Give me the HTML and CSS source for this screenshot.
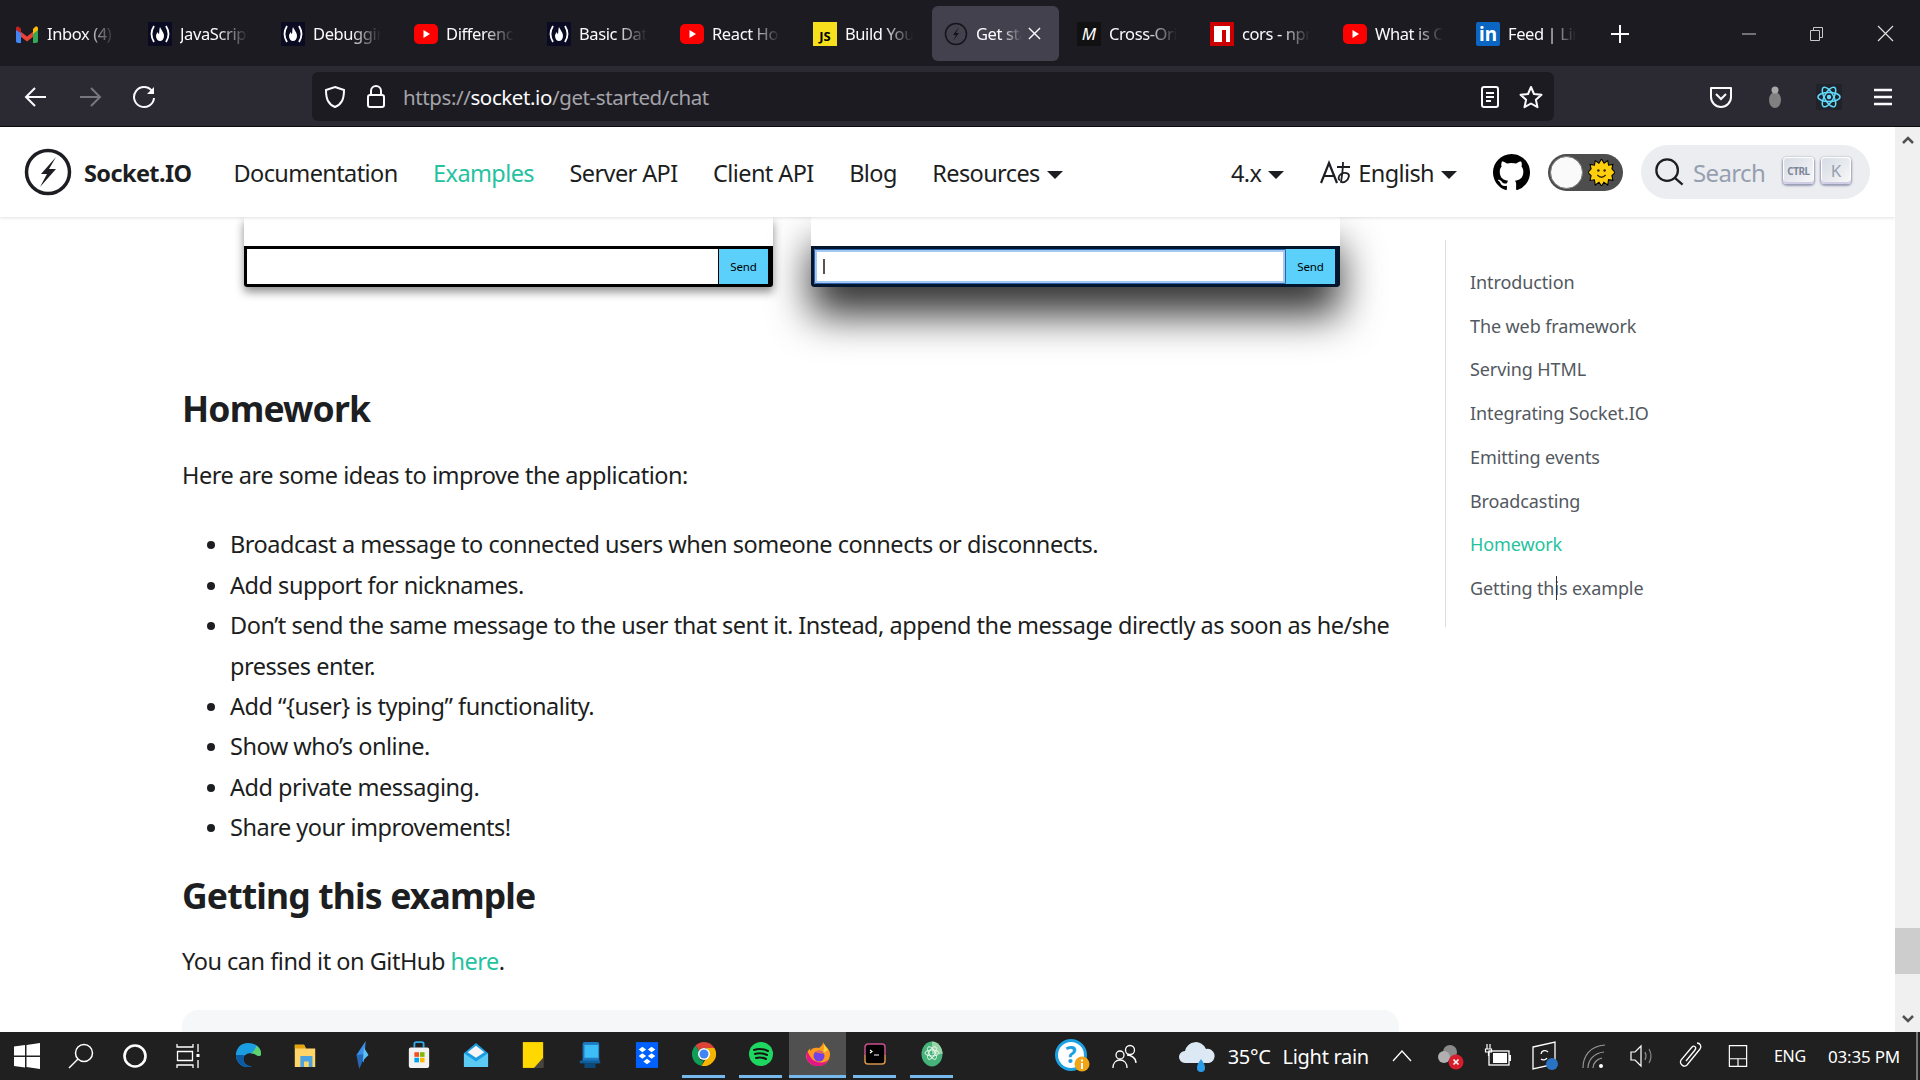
FILE: index.html
```html
<!DOCTYPE html>
<html lang="en">
<head>
    <meta charset="UTF-8">
    <title>Get started | Socket.IO</title>
    <link rel="stylesheet" href="styles.css">
</head>
<body>

    <svg class="defs" width="0" height="0">
        <symbol id="fcc" viewBox="0 0 24 24">
            <rect width="24" height="24" fill="#0a0a23"/>
            <path d="M6 4Q1 12 6 20M18 4Q23 12 18 20" fill="none" stroke="#fff" stroke-width="1.8"/>
            <path d="M12 5c1 3 4 5 4 9 0 3-2 5-4 5s-4-2-4-5c0-2 1-3 2-4 0 1 .5 2 1 2 .5-2 0-4 1-7z" fill="#fff"/>
        </symbol>
        <symbol id="yt" viewBox="0 0 24 24">
            <rect y="2" width="24" height="20" rx="5" fill="#f00"/>
            <path d="M9.5 8l6.5 4-6.500 4z" fill="#fff"/>
        </symbol>
    </svg>

    <!-- Tab strip -->
    <div class="tabbar">
        <div class="tab">
            <svg class="favicon" viewBox="0 0 24 24"><path d="M1 6l11 8.500L23 6v5l-11 8.500L1 11z" fill="#ea4335"/><path d="M1 7l5 4v10H3a2 2 0 0 1-2-2z" fill="#4285f4"/><path d="M18 11l5-4v12a2 2 0 0 1-2 2h-3z" fill="#34a853"/><path d="M18 7l2-2c1-1 3-.5 3 1.500V8l-5 4z" fill="#fbbc04"/><path d="M1 8V6.500C1 4.500 3 4 4 5l2 2v4z" fill="#c5221f"/></svg>
            <span class="tab-label">Inbox (4) - Gmail</span>
        </div>
        <div class="tab"><svg class="favicon"><use href="#fcc"/></svg><span class="tab-label">JavaScript Tutorial</span></div>
        <div class="tab"><svg class="favicon"><use href="#fcc"/></svg><span class="tab-label">Debugging Node</span></div>
        <div class="tab"><svg class="favicon"><use href="#yt"/></svg><span class="tab-label">Difference between</span></div>
        <div class="tab"><svg class="favicon"><use href="#fcc"/></svg><span class="tab-label">Basic Data Types</span></div>
        <div class="tab"><svg class="favicon"><use href="#yt"/></svg><span class="tab-label">React Hooks Course</span></div>
        <div class="tab">
            <span class="favicon js-icon">JS</span>
            <span class="tab-label">Build Your Own</span>
        </div>
        <div class="tab active">
            <svg class="favicon" viewBox="0 0 24 24"><circle cx="12" cy="12" r="10.500" fill="none" stroke="#15141a" stroke-width="1.500"/><path d="M15 5L9 13h3l-3 6 6-8h-3z" fill="#15141a"/></svg>
            <span class="tab-label short">Get started</span>
            <svg class="tab-close" viewBox="0 0 14 14"><path d="M1 1l12 12M13 1L1 13" stroke="#fbfbfe" stroke-width="1.500"/></svg>
        </div>
        <div class="tab">
            <span class="favicon mdn-icon">M</span>
            <span class="tab-label">Cross-Origin Resource</span>
        </div>
        <div class="tab">
            <svg class="favicon" viewBox="0 0 24 24"><rect width="24" height="24" fill="#c00"/><path d="M4 4h16v16h-4V8h-4v12H4z" fill="#fff"/></svg>
            <span class="tab-label">cors - npm package</span>
        </div>
        <div class="tab"><svg class="favicon"><use href="#yt"/></svg><span class="tab-label">What is CORS?</span></div>
        <div class="tab">
            <span class="favicon in-icon">in</span>
            <span class="tab-label">Feed | LinkedIn</span>
        </div>
        <div class="new-tab">
            <svg width="20" height="20" viewBox="0 0 20 20"><path d="M10 1v18M1 10h18" stroke="#fbfbfe" stroke-width="2"/></svg>
        </div>
        <div class="window-controls">
            <div class="window-btn"><svg width="16" height="16" viewBox="0 0 16 16"><path d="M1 8h14" stroke="#c8c8c8"/></svg></div>
            <div class="window-btn"><svg width="16" height="16" viewBox="0 0 16 16"><path d="M1.500 4.500h9v10h-9zM4.500 4.500v-3h9v10h-3" fill="none" stroke="#c8c8c8"/></svg></div>
            <div class="window-btn"><svg width="17" height="17" viewBox="0 0 17 17"><path d="M1 1l15 15M16 1L1 16" stroke="#e0e0e0" stroke-width="1.200"/></svg></div>
        </div>
    </div>

    <!-- Address bar -->
    <div class="toolbar">
        <div class="tool-group">
            <div class="tool-btn"><svg width="24" height="24" viewBox="0 0 24 24"><path d="M22 12H3M11 3l-9 9 9 9" fill="none" stroke="#fbfbfe" stroke-width="2"/></svg></div>
            <div class="tool-btn"><svg width="24" height="24" viewBox="0 0 24 24"><path d="M2 12h19M13 3l9 9-9 9" fill="none" stroke="#77767d" stroke-width="2"/></svg></div>
            <div class="tool-btn"><svg width="24" height="24" viewBox="0 0 24 24"><path d="M20 6A10 10 0 1 0 22 13" fill="none" stroke="#fbfbfe" stroke-width="2"/><path d="M22 2v7h-7" fill="#fbfbfe"/></svg></div>
        </div>
        <div class="urlbar">
            <svg class="url-icon" width="22" height="24" viewBox="0 0 22 24"><path d="M11 2l9 3c0 9-2 14-9 17C4 19 2 14 2 5z" fill="none" stroke="#fbfbfe" stroke-width="2"/></svg>
            <svg class="url-icon" width="20" height="24" viewBox="0 0 20 24"><rect x="2" y="10" width="16" height="12" rx="2" fill="none" stroke="#fbfbfe" stroke-width="2"/><path d="M5 10V6a5 5 0 0 1 10 0v4" fill="none" stroke="#fbfbfe" stroke-width="2"/></svg>
            <span class="url-text">https://<b>socket.io</b>/get-started/chat</span>
            <div class="url-actions">
                <svg width="20" height="22" viewBox="0 0 20 22"><rect x="2" y="1" width="16" height="20" rx="2" fill="none" stroke="#fbfbfe" stroke-width="2"/><path d="M6 7h8M6 11h8M6 15h5" stroke="#fbfbfe" stroke-width="2"/></svg>
                <svg width="24" height="24" viewBox="0 0 24 24"><path d="M12 2l3 7 7.500.8-5.600 5 1.600 7.400L12 18.500l-6.500 3.700L7.100 14.800 1.500 9.800 9 9z" fill="none" stroke="#fbfbfe" stroke-width="2" stroke-linejoin="round"/></svg>
            </div>
        </div>
        <div class="tool-group extensions">
            <div class="tool-btn"><svg width="24" height="24" viewBox="0 0 24 24"><path d="M2 3h20v9a10 10 0 0 1-20 0z" fill="none" stroke="#fbfbfe" stroke-width="2" stroke-linejoin="round"/><path d="M7 9l5 5 5-5" fill="none" stroke="#fbfbfe" stroke-width="2"/></svg></div>
            <div class="tool-btn"><svg width="24" height="24" viewBox="0 0 24 24"><ellipse cx="12" cy="15" rx="6" ry="8" fill="#808080"/><circle cx="12" cy="5" r="3.500" fill="#a8a8a8"/></svg></div>
            <div class="tool-btn"><svg class="react-icon" width="26" height="26" viewBox="0 0 26 26"><rect width="26" height="26" fill="#20232a"/><g fill="none" stroke="#61dafb" stroke-width="1.500"><ellipse cx="13" cy="13" rx="11" ry="4.500"/><ellipse cx="13" cy="13" rx="11" ry="4.500" transform="rotate(60 13 13)"/><ellipse cx="13" cy="13" rx="11" ry="4.500" transform="rotate(120 13 13)"/></g><circle cx="13" cy="13" r="2.200" fill="#61dafb"/></svg></div>
            <div class="tool-btn"><svg width="22" height="20" viewBox="0 0 22 20"><path d="M2 3h18M2 10h18M2 17h18" stroke="#fbfbfe" stroke-width="2.500"/></svg></div>
        </div>
    </div>

    <div class="page">
        <div class="viewport">

            <!-- Site navbar -->
            <header class="navbar">
                <svg class="logo" width="48" height="48" viewBox="0 0 48 48"><circle cx="24" cy="24" r="21.500" fill="none" stroke="#1c1e21" stroke-width="3.500"/><path d="M32 9L17 26h6l-7 13 16-18h-7z" fill="#1c1e21"/></svg>
                <span class="brand">Socket.IO</span>
                <nav class="nav-links">
                    <a href="#">Documentation</a>
                    <a href="#" class="current">Examples</a>
                    <a href="#">Server API</a>
                    <a href="#">Client API</a>
                    <a href="#">Blog</a>
                    <a href="#" class="dropdown">Resources</a>
                </nav>
                <div class="nav-right">
                    <a href="#" class="dropdown version">4.x</a>
                    <a href="#" class="dropdown locale">
                        <svg width="32" height="28" viewBox="0 0 32 28"><path d="M1 24L9 4l8 20M4 17h10" fill="none" stroke="#1c1e21" stroke-width="2.200"/><path d="M17 8h13M23 3c0 7-1 14-2 20 3 1 7-1 8-6 0-3-4-4-8-2-3 2-3 6-1 6" fill="none" stroke="#1c1e21" stroke-width="1.800"/></svg>
                        English
                    </a>
                    <svg class="github" width="37" height="37" viewBox="0 0 16 16"><path fill="#000" d="M8 0C3.580 0 0 3.580 0 8c0 3.540 2.290 6.530 5.470 7.590.4.070.55-.17.55-.38 0-.19-.01-.82-.01-1.490-2.010.37-2.530-.49-2.690-.94-.09-.23-.48-.94-.82-1.130-.28-.15-.68-.52-.01-.53.63-.01 1.080.58 1.230.82.72 1.210 1.870.87 2.330.66.070-.52.28-.87.51-1.070-1.780-.2-3.640-.89-3.640-3.950 0-.87.31-1.590.82-2.150-.08-.2-.36-1.020.08-2.120 0 0 .67-.21 2.200.82.64-.18 1.320-.27 2-.27.68 0 1.360.09 2 .27 1.530-1.040 2.200-.82 2.200-.82.44 1.100.16 1.920.08 2.120.51.56.82 1.270.82 2.150 0 3.070-1.870 3.750-3.650 3.950.29.25.54.73.54 1.480 0 1.070-.01 1.930-.01 2.200 0 .21.15.46.55.38A8.013 8.013 0 0 0 16 8c0-4.420-3.580-8-8-8z"/></svg>
                    <div class="toggle">
                        <span class="toggle-knob"></span>
                        <svg class="toggle-sun" width="27" height="27" viewBox="0 0 26 26"><path d="M13 0l2.500 4L19 1.500 19.800 6l4.200-.8-1 4.300L26 13l-3 3 1 4.500-4.300-.6L19 25l-3.700-2.600L13 26l-2.400-3.600L7 25l-.8-5-4.200.6L3 16l-3-3 3-3.500L2 5.200 6.200 6 7 1.500l3.500 2.500z" fill="#ffcf0d" stroke="#000" stroke-width="1"/><circle cx="10" cy="11" r="1.200" fill="#332400"/><circle cx="16" cy="11" r="1.200" fill="#332400"/><path d="M9 15.500q4 4 8 0" fill="none" stroke="#332400" stroke-width="1.300"/></svg>
                    </div>
                    <div class="search">
                        <svg width="30" height="30" viewBox="0 0 32 32"><circle cx="14" cy="14" r="11.500" fill="none" stroke="#1c1e21" stroke-width="2.400"/><path d="M22.500 22.500l8 7" stroke="#1c1e21" stroke-width="2.400"/></svg>
                        <span class="search-label">Search</span>
                        <span class="key ctrl">CTRL</span>
                        <span class="key">K</span>
                    </div>
                </div>
            </header>

            <div class="docs">
                <!-- Article -->
                <main class="article">
                    <div class="demo-row">
                        <div class="demo-card">
                            <div class="demo-form">
                                <div class="demo-input"></div>
                                <div class="demo-send">Send</div>
                            </div>
                        </div>
                        <div class="demo-card focused">
                            <div class="demo-form">
                                <div class="demo-input"><span class="input-caret"></span></div>
                                <div class="demo-send">Send</div>
                            </div>
                        </div>
                    </div>

                    <h2>Homework</h2>
                    <p>Here are some ideas to improve the application:</p>
                    <ul>
                        <li>Broadcast a message to connected users when someone connects or disconnects.</li>
                        <li>Add support for nicknames.</li>
                        <li>Don’t send the same message to the user that sent it. Instead, append the message directly as soon as he/she presses enter.</li>
                        <li>Add “{user} is typing” functionality.</li>
                        <li>Show who’s online.</li>
                        <li>Add private messaging.</li>
                        <li>Share your improvements!</li>
                    </ul>

                    <h2 class="second">Getting this example</h2>
                    <p>You can find it on GitHub <a href="#">here</a>.</p>
                    <div class="code-block"></div>
                </main>

                <!-- Table of contents -->
                <aside class="toc">
                    <a href="#">Introduction</a>
                    <a href="#">The web framework</a>
                    <a href="#">Serving HTML</a>
                    <a href="#">Integrating Socket.IO</a>
                    <a href="#">Emitting events</a>
                    <a href="#">Broadcasting</a>
                    <a href="#" class="current">Homework</a>
                    <a href="#" class="hovered">Getting this example<span class="ibeam"></span></a>
                </aside>
            </div>
        </div>

        <div class="scrollbar">
            <svg width="14" height="10" viewBox="0 0 14 10"><path d="M2 8l5-5 5 5" fill="none" stroke="#505050" stroke-width="2.500"/></svg>
            <div class="scroll-space"></div>
            <div class="scroll-thumb"></div>
            <div class="scroll-rest"></div>
            <svg width="14" height="10" viewBox="0 0 14 10"><path d="M2 2l5 5 5-5" fill="none" stroke="#505050" stroke-width="2.500"/></svg>
        </div>
    </div>

    <!-- Windows taskbar -->
    <footer class="taskbar">
        <div class="task-left">
            <div class="sys-btn"><svg width="26" height="26" viewBox="0 0 26 26"><path d="M0 3.600l11-1.500v10.400H0zM12.500 1.900L26 0v12.500H12.500zM0 14h11v10.400L0 22.900zM12.500 14H26v12l-13.500-1.900z" fill="#fff"/></svg></div>
            <div class="sys-btn"><svg width="26" height="26" viewBox="0 0 26 26"><circle cx="16" cy="10" r="8.500" fill="none" stroke="#fff" stroke-width="1.500"/><path d="M10 16L1 25" stroke="#fff" stroke-width="1.500"/></svg></div>
            <div class="sys-btn"><svg width="26" height="26" viewBox="0 0 26 26"><circle cx="13" cy="13" r="10.500" fill="none" stroke="#fff" stroke-width="2.600"/></svg></div>
            <div class="sys-btn"><svg width="26" height="26" viewBox="0 0 26 26"><path d="M1 1v3h16V1M1 25v-3h16v3M1.500 8.500h15v9h-15zM22 1v8M22 17v8" fill="none" stroke="#fff" stroke-width="1.300"/><rect x="20.500" y="11" width="3" height="3" fill="#fff"/></svg></div>

            <div class="app"><svg width="26" height="26" viewBox="0 0 28 28"><path d="M14 1C6 1 1 7 1 14c0 8 6 13 12 13 2 0 4-.5 5-1-5 0-9-3-9-8 0-4 4-6 8-6 5 0 6 3 9 3 2 0 2-2 2-3C28 6 22 1 14 1z" fill="#1b9de2"/><path d="M17 12c5 0 6 3 9 3 2 0 2-2 2-3 0-3-2-6-5-8-1 3-3 7-6 8z" fill="#5fd36a"/><path d="M1 14c0 8 6 13 12 13 2 0 4-.5 5-1-5 0-9-3-9-8 0-2 1-3 2-4-5 0-9 0-10 0z" fill="#0c59a4"/></svg></div>
            <div class="app"><svg width="26" height="26" viewBox="0 0 28 28"><path d="M3 3h10l2 4h10v20H3z" fill="#ffd56a"/><path d="M3 3h10l2 4H3z" fill="#e5a50a"/><path d="M9 15h13v12h-4v-6h-5v6H9z" fill="#4aa3e0"/></svg></div>
            <div class="app"><svg width="26" height="30" viewBox="0 0 28 32"><path d="M18 1L8 16l8 8z" fill="#3c8fe8"/><path d="M8 16l10-1-7 16z" fill="#2667b8"/><path d="M16 8l5 8-6 6z" fill="#59c3f5"/></svg></div>
            <div class="app"><svg width="24" height="28" viewBox="0 0 26 30"><path d="M8 7V3a2 2 0 0 1 2-2h6a2 2 0 0 1 2 2v4" fill="none" stroke="#32a8e8" stroke-width="2"/><rect x="2" y="7" width="22" height="22" rx="2" fill="#f2f2f2"/><rect x="8" y="12" width="5" height="5" fill="#f25022"/><rect x="14" y="12" width="5" height="5" fill="#7fba00"/><rect x="8" y="18" width="5" height="5" fill="#00a4ef"/><rect x="14" y="18" width="5" height="5" fill="#ffb900"/></svg></div>
            <div class="app"><svg width="26" height="26" viewBox="0 0 28 28"><path d="M1 12L14 1l13 11v15H1z" fill="#1b9de2"/><path d="M1 12l13 9 13-9v15H1z" fill="#5ccbf4"/><path d="M5 11L14 4l9 7-9 6z" fill="#f5f5f5"/></svg></div>
            <div class="app"><svg width="24" height="28" viewBox="0 0 26 30"><rect x="2" y="1" width="22" height="28" fill="#ffd800"/><path d="M14 29l10-11v11z" fill="#444"/></svg></div>
            <div class="app"><svg width="24" height="28" viewBox="0 0 26 30"><rect x="5" y="1" width="18" height="23" rx="2" fill="#1c78c0"/><rect x="7" y="4" width="15" height="14" fill="#3dbdf5"/><rect x="2" y="21" width="22" height="3" fill="#0e5f9e"/><rect x="7" y="24" width="12" height="5" fill="#0b4a7d"/></svg></div>
            <div class="app"><svg width="24" height="28" viewBox="0 0 26 30"><rect x="1" y="1" width="24" height="28" fill="#0061fe"/><g fill="#fff"><path d="M8 6l4 3-4 3-4-3zM18 6l4 3-4 3-4-3zM8 13l4 3-4 3-4-3zM18 13l4 3-4 3-4-3zM13 19l4 3-4 3-4-3z"/></g></svg></div>
            <div class="app running"><svg width="24" height="24" viewBox="0 0 24 24"><path d="M12 0a12 12 0 0 1 10.400 6H12a6 6 0 0 0-5.200 3L3.500 3.500A12 12 0 0 1 12 0z" fill="#db4437"/><path d="M3.500 3.500L9 12a3 3 0 0 0 3 6l-2.500 5.800A12 12 0 0 1 3.500 3.500z" fill="#0f9d58"/><path d="M22.400 6A12 12 0 0 1 9.500 23.800L15 15a6 6 0 0 0-1-9z" fill="#f4b400"/><circle cx="12" cy="12" r="6" fill="#fff"/><circle cx="12" cy="12" r="4.500" fill="#4285f4"/></svg></div>
            <div class="app running"><svg width="24" height="24" viewBox="0 0 24 24"><circle cx="12" cy="12" r="12" fill="#1ed760"/><path d="M5 8q7-2.500 14 1M6 12q6-2 12 1M7 16q5-1.500 10 1" fill="none" stroke="#191414" stroke-width="2" stroke-linecap="round"/></svg></div>
            <div class="app running hot"><svg width="24" height="24" viewBox="0 0 24 24"><path d="M17 0c0 3-2 4-4 6-4-1-7 0-9 3 0-1 0-2 .5-3C1 9 0 13 0 15c1 5 6 9 12 9 7 0 12-5 12-12 0-5-5-7-7-12z" fill="#ff9a1f"/><path d="M18 2c1 2 3 4 4 6l-5 3c1-3 1-6 1-9z" fill="#ffd43a"/><path d="M1 9c-2 6 0 11 4 13 4 3 10 3 14 0 2-2 3-3 3-4-5 4-12 3-16-1-2-2-3-5-5-8z" fill="#e31587"/><circle cx="13" cy="14" r="5.500" fill="#7542e5"/><path d="M9 10c3-2 7-1 9 2-3-1-6-1-9-2z" fill="#ff7139"/></svg></div>
            <div class="app running"><svg width="22" height="22" viewBox="0 0 22 22"><rect x="1" y="1" width="20" height="20" rx="3" fill="#000"/><path d="M1 12V4a3 3 0 0 1 3-3h14a3 3 0 0 1 3 3v8" fill="none" stroke="#c84f8f" stroke-width="1.500"/><path d="M1 12v6a3 3 0 0 0 3 3h14a3 3 0 0 0 3-3v-6" fill="none" stroke="#d69447" stroke-width="1.500"/><path d="M6 7l2 1.500-2 1.500M10 12h5" fill="none" stroke="#fff" stroke-width="1.200"/></svg></div>
            <div class="app running"><svg width="22" height="26" viewBox="0 0 22 26"><ellipse cx="11" cy="13" rx="10.500" ry="12.500" fill="#46b37a"/><path d="M11 .5A10.500 12.500 0 0 1 21.500 13H11z" fill="#96d4a6"/><g fill="none" stroke="#e6f5ea" stroke-width="1"><ellipse cx="11" cy="12" rx="7" ry="3"/><ellipse cx="11" cy="12" rx="7" ry="3" transform="rotate(60 11 12)"/><ellipse cx="11" cy="12" rx="7" ry="3" transform="rotate(120 11 12)"/></g></svg></div>
        </div>

        <div class="task-right">
            <div class="tray help"><svg width="36" height="36" viewBox="0 0 36 36"><circle cx="16" cy="17" r="14.500" fill="#fff" stroke="#1ba1e2" stroke-width="3"/><text x="16" y="25" text-anchor="middle" class="help-mark">?</text><circle cx="27" cy="26" r="7.500" fill="#f2a516"/><rect x="26" y="25" width="2" height="6" fill="#fff"/><rect x="26" y="21.500" width="2" height="2" fill="#fff"/></svg></div>
            <div class="tray people"><svg width="26" height="26" viewBox="0 0 26 26"><circle cx="18" cy="7" r="4.500" fill="none" stroke="#fff" stroke-width="1.300"/><circle cx="8" cy="12" r="4" fill="none" stroke="#fff" stroke-width="1.300"/><path d="M1 25c0-5 3-8 7-8s7 3 7 8M15 12c4 0 9 3 9 8" fill="none" stroke="#fff" stroke-width="1.300"/></svg></div>
            <div class="weather">
                <svg width="38" height="34" viewBox="0 0 38 34"><path d="M7 24a6 6 0 0 1 0-12 11 11 0 0 1 21-2 7 7 0 0 1 3 14z" fill="#dce9f5"/><path d="M23 20c3 4 4 6 4 9a4 4 0 0 1-8 0c0-3 1-5 4-9z" fill="#2b9de8"/></svg>
                <span class="temp">35°C</span>
                <span>Light rain</span>
            </div>
            <div class="tray chevron"><svg width="22" height="14" viewBox="0 0 22 14"><path d="M2 12L11 2l9 10" fill="none" stroke="#fff" stroke-width="1.300"/></svg></div>
            <div class="tray"><svg width="28" height="28" viewBox="0 0 28 28"><circle cx="14" cy="10" r="7" fill="#8a8a8a"/><circle cx="8" cy="15" r="6" fill="#b0b0b0"/><circle cx="20" cy="20" r="7.500" fill="#d81e2c"/><path d="M17.500 17.500l5 5M22.500 17.500l-5 5" stroke="#fff" stroke-width="1.600"/></svg></div>
            <div class="tray"><svg width="28" height="28" viewBox="0 0 28 28"><path d="M3 2v5M6 2v5M1.500 7h6v3h-6zM4.500 10v4" fill="none" stroke="#fff" stroke-width="1.200"/><rect x="5" y="9" width="20" height="14" fill="none" stroke="#fff" stroke-width="1.300"/><rect x="9" y="11" width="14" height="10" fill="#fff"/><rect x="25" y="13" width="2" height="6" fill="#fff"/></svg></div>
            <div class="tray"><svg width="28" height="30" viewBox="0 0 28 30"><path d="M1 6L23 1v22L1 28z" fill="none" stroke="#fff" stroke-width="1.300"/><path d="M9 13a4 4 0 0 1 7-2M15 17a4 4 0 0 1-6 1" fill="none" stroke="#fff" stroke-width="1.300"/><circle cx="20" cy="23" r="6" fill="#2a72c4"/></svg></div>
            <div class="tray"><svg width="26" height="26" viewBox="0 0 26 26"><g fill="none" stroke="#999" stroke-width="1.200"><path d="M2 25C2 13 9 3 24 2M7 25c0-8 6-15 16-16M12 25c0-5 4-9 9-10"/></g><circle cx="20" cy="23" r="2" fill="#fff"/></svg></div>
            <div class="tray"><svg width="26" height="26" viewBox="0 0 26 26"><path d="M2 9h4l6-6v20l-6-6H2z" fill="none" stroke="#fff" stroke-width="1.200"/><path d="M16 9q2 4 0 8M20 6q4 7 0 14" fill="none" stroke="#888" stroke-width="1.200"/></svg></div>
            <div class="tray"><svg width="26" height="28" viewBox="0 0 26 28"><path d="M20 1c3 0 5 3 3 6L10 23c-3 3-8-1-6-5L15 5c2-2 5 0 3 3L9 19" fill="none" stroke="#fff" stroke-width="1.300"/></svg></div>
            <div class="tray"><svg width="20" height="24" viewBox="0 0 22 26"><path d="M1.500 1.500h19v23h-19zM1.500 16h19M11 16v8" fill="none" stroke="#fff" stroke-width="1.300"/></svg></div>
            <span class="tray-text lang">ENG</span>
            <span class="tray-text clock">03:35 PM</span>
            <div class="show-desktop"></div>
        </div>
    </footer>

</body>
</html>
```

FILE: styles.css
```css
/* General Styles */
html, body {
    margin: 0;
    padding: 0;
    height: 1080px;
    overflow: hidden;
    font-family: "Noto Sans", "Open Sans", sans-serif;
    color: #1c1e21;
    background-color: #fff;
}

body {
    display: flex;
    flex-direction: column;
}

.defs {
    position: absolute;
}

a {
    text-decoration: none;
    color: inherit;
}

/* Tab strip */
.tabbar {
    height: 66px;
    flex: none;
    display: flex;
    align-items: flex-start;
    background-color: #1c1b22;
    color: #fbfbfe;
}

.tab {
    width: 133px;
    height: 55px;
    margin-top: 6px;
    padding-left: 15px;
    box-sizing: border-box;
    flex: none;
    display: flex;
    align-items: center;
    gap: 8px;
}

.tab.active {
    background-color: #42414d;
    border-radius: 6px;
    width: 127px;
    margin: 6px 3px 0 1px;
    padding-left: 12px;
    position: relative;
}

.favicon {
    width: 24px;
    height: 24px;
    flex: none;
}

.tab-label {
    width: 68px;
    overflow: hidden;
    white-space: nowrap;
    font-size: 16.500px;
    letter-spacing: -0.4px;
    -webkit-mask-image: linear-gradient(to right, #000 55%, transparent);
    mask-image: linear-gradient(to right, #000 55%, transparent);
}

.tab-label.short {
    width: 46px;
}

.tab-close {
    width: 13px;
    height: 13px;
    margin-left: -2px;
}

.js-icon {
    background-color: #f7df1e;
    color: #000;
    font-size: 13px;
    font-weight: 700;
    display: flex;
    align-items: flex-end;
    justify-content: center;
    line-height: 20px;
}

.mdn-icon {
    background-color: #111;
    color: #fff;
    font-style: italic;
    font-size: 17px;
    text-align: center;
    line-height: 24px;
}

.in-icon {
    background-color: #0a66c2;
    color: #fff;
    font-size: 19px;
    font-weight: 700;
    text-align: center;
    line-height: 24px;
    border-radius: 2px;
}

.new-tab {
    width: 52px;
    height: 55px;
    margin-top: 6px;
    display: flex;
    align-items: center;
    justify-content: center;
}

.window-controls {
    margin-left: auto;
    display: flex;
    height: 55px;
    margin-top: 6px;
}

.window-btn {
    width: 68.500px;
    display: flex;
    align-items: center;
    justify-content: center;
}

/* Address bar */
.toolbar {
    height: 61px;
    flex: none;
    box-sizing: border-box;
    border-bottom: 1px solid #0c0c0d;
    padding: 6px 9px 5px;
    display: flex;
    align-items: stretch;
    background-color: #2b2a33;
}

.tool-group {
    display: flex;
}

.tool-btn {
    width: 54px;
    display: flex;
    align-items: center;
    justify-content: center;
}

.urlbar {
    width: 1242px;
    margin-left: 141px;
    padding: 0 11px 0 12px;
    box-sizing: border-box;
    display: flex;
    align-items: center;
    background-color: #1c1b22;
    border-radius: 6px;
    color: #a4a3a9;
}

.url-icon {
    margin-right: 20px;
}

.url-text {
    margin-left: -3px;
    font-size: 20.500px;
    letter-spacing: -0.4px;
}

.url-text b {
    font-weight: 400;
    color: #fbfbfe;
}

.url-actions {
    margin-left: auto;
    display: flex;
    align-items: center;
    gap: 19px;
}

.extensions {
    margin-left: 140px;
}

/* Page area */
.page {
    flex: 1;
    min-height: 0;
    display: flex;
}

.viewport {
    flex: 1;
    min-width: 0;
    display: flex;
    flex-direction: column;
    overflow: hidden;
}

/* Navbar */
.navbar {
    height: 90px;
    flex: none;
    padding: 0 25px 0 24px;
    display: flex;
    align-items: center;
    font-size: 23.500px;
    letter-spacing: -0.6px;
    background-color: #fff;
    box-shadow: 0 1px 3px rgba(0, 0, 0, 0.12);
    position: relative;
    z-index: 10;
}

.brand {
    margin-left: 12px;
    margin-top: 1px;
    font-weight: 700;
}

.nav-links {
    margin-left: 42px;
    margin-top: 2px;
    display: flex;
    gap: 35.500px;
}

.nav-links a,
.nav-right a {
    display: flex;
    align-items: center;
    white-space: nowrap;
}

.nav-right a {
    margin-top: 2px;
}

.navbar .current {
    color: #25c2a0;
}

.dropdown::after {
    content: "";
    margin-left: 7px;
    border-left: 8px solid transparent;
    border-right: 8px solid transparent;
    border-top: 8px solid #1c1e21;
    margin-top: 3px;
}

.nav-right {
    margin-left: auto;
    display: flex;
    align-items: center;
}

.locale svg {
    margin-right: 6px;
}

.version {
    margin-right: 36px;
}

.github {
    margin-left: 36px;
}

.toggle {
    width: 75px;
    height: 37px;
    margin-left: 18px;
    box-sizing: border-box;
    border-radius: 19px;
    background-color: #4d4d4d;
    position: relative;
}

.toggle-knob {
    width: 33px;
    height: 33px;
    display: block;
    margin: 2px;
    border-radius: 50%;
    background-color: #fafafa;
    box-sizing: border-box;
    border: 1px solid #777;
}

.toggle-sun {
    position: absolute;
    right: 8px;
    top: 5px;
}

.search {
    width: 229px;
    height: 54px;
    margin-left: 18px;
    padding-left: 13px;
    box-sizing: border-box;
    border-radius: 27px;
    background-color: #ebedf0;
    display: flex;
    align-items: center;
}

.search-label {
    width: 71px;
    margin-left: 9px;
    color: #969faf;
    font-size: 24px;
    letter-spacing: -0.65px;
}

.key {
    width: 30px;
    height: 27px;
    margin-left: 7px;
    margin-bottom: 3px;
    box-sizing: border-box;
    border-radius: 4px;
    background: linear-gradient(-225deg, #d5dbe4, #f8f8f8);
    box-shadow: inset 0 -2px 0 0 #cdcde6, inset 0 0 1px 1px #fff, 0 1px 2px 1px rgba(30, 35, 90, 0.4);
    color: #969faf;
    font-size: 17px;
    letter-spacing: 0;
    display: flex;
    align-items: center;
    justify-content: center;
}

.key.ctrl {
    width: 31px;
    margin-left: 19px;
    font-size: 10px;
    font-weight: 700;
    letter-spacing: -0.5px;
    color: #7d8699;
}

/* Docs layout */
.docs {
    flex: 1;
    min-height: 0;
    display: flex;
    align-items: flex-start;
}

.article {
    width: 1217px;
    margin-left: 182px;
    flex: none;
    font-size: 23.500px;
    letter-spacing: -0.48px;
    line-height: 40.400px;
}

.article a {
    color: #25c2a0;
}

.demo-row {
    display: flex;
    gap: 38px;
    margin-left: 62px;
}

.demo-card {
    width: 529px;
    height: 70px;
    padding-top: 29px;
    box-sizing: border-box;
    background-color: #fff;
    box-shadow: 0 5px 10px rgba(0, 0, 0, 0.45);
    border-radius: 0 0 3px 3px;
}

.demo-card.focused {
    box-shadow: 0 28px 40px rgba(0, 0, 0, 0.8);
}

.demo-form {
    height: 41px;
    padding: 3px 5px 3px 3px;
    box-sizing: border-box;
    display: flex;
    background-color: #000;
    border-radius: 0 0 3px 3px;
}

.demo-input {
    flex: 1;
    background-color: #fff;
    border-right: 1px solid #000;
    padding-left: 9px;
    display: flex;
    align-items: center;
}

.focused .demo-form {
    background-color: #04152e;
}

.focused .demo-input {
    box-shadow: inset 0 0 0 1px #2b64ad, inset 0 0 0 3px #a5c9f0;
    border-radius: 2px;
    border-right: 0;
}

.input-caret {
    width: 2px;
    height: 15px;
    background-color: #555;
}

.demo-send {
    width: 49px;
    background-color: #5bd0fb;
    color: #000;
    font-size: 11.500px;
    letter-spacing: -0.1px;
    line-height: 35px;
    text-align: center;
}

.article h2 {
    margin: 96px 0 0;
    font-size: 35.500px;
    font-weight: 700;
    letter-spacing: -0.85px;
    line-height: 50px;
}

.article h2.second {
    margin-top: 22px;
}

.article p {
    margin: 22px 0 0;
}

.article h2.second + p {
    margin-top: 21px;
}

.article ul {
    margin: 29px 0 0;
    padding-left: 48px;
}

.code-block {
    height: 90px;
    margin-top: 29px;
    background-color: #f6f7f8;
    border-radius: 16px;
}

/* Table of contents */
.toc {
    width: 300px;
    margin: 23px 0 0 46px;
    padding: 21px 0 16px 24px;
    box-sizing: border-box;
    flex: none;
    border-left: 1px solid #dadde1;
    display: flex;
    flex-direction: column;
    font-size: 18px;
    letter-spacing: -0.1px;
    line-height: 43.700px;
    color: #525860;
    position: relative;
}

.toc .current {
    color: #25c2a0;
}

.ibeam {
    position: absolute;
    left: 110px;
    bottom: 27px;
    width: 1px;
    height: 24px;
    background-color: #333;
}

/* Scrollbar */
.scrollbar {
    width: 25px;
    flex: none;
    background-color: #f0f0f0;
    display: flex;
    flex-direction: column;
    align-items: center;
    padding: 8px 0;
    box-sizing: border-box;
}

.scroll-space {
    flex: 1;
}

.scroll-thumb {
    width: 100%;
    height: 46px;
    background-color: #cdcdcd;
}

.scroll-rest {
    height: 40px;
}

/* Taskbar */
.taskbar {
    height: 48px;
    flex: none;
    display: flex;
    justify-content: space-between;
    background-color: #202020;
    color: #fff;
}

.task-left,
.task-right {
    display: flex;
    align-items: stretch;
}

.sys-btn {
    width: 54px;
    display: flex;
    align-items: center;
    justify-content: center;
}

.sys-btn:nth-child(4) {
    margin-right: 3px;
}

.app {
    width: 57px;
    box-sizing: border-box;
    display: flex;
    align-items: center;
    justify-content: center;
    padding-bottom: 3px;
}

.app.running {
    border-left: 7px solid #202020;
    border-right: 7px solid #202020;
    border-bottom: 2px solid #202020;
    box-shadow: inset 0 -3px 0 0 #76b9ed;
}

.app.hot {
    border-left: 0;
    border-right: 0;
    background-color: #505050;
}

.tray {
    width: 48px;
    display: flex;
    align-items: center;
    justify-content: center;
}

.help-mark {
    font-size: 23px;
    font-weight: 700;
    fill: #1ba1e2;
}

.help {
    width: 50px;
}

.people {
    width: 54px;
}

.weather {
    margin-left: 26px;
    display: flex;
    align-items: center;
    gap: 12px;
    font-size: 20px;
    letter-spacing: -0.3px;
    white-space: nowrap;
}

.chevron {
    margin-left: 9px;
}

.tray-text {
    display: flex;
    align-items: center;
    font-size: 16px;
    letter-spacing: -0.2px;
    white-space: nowrap;
}

.lang {
    margin-left: 12px;
}

.clock {
    margin-left: 22px;
    font-size: 17px;
}

.show-desktop {
    width: 2px;
    margin-left: 16px;
    margin-right: 2px;
    background-color: #777;
}
```
